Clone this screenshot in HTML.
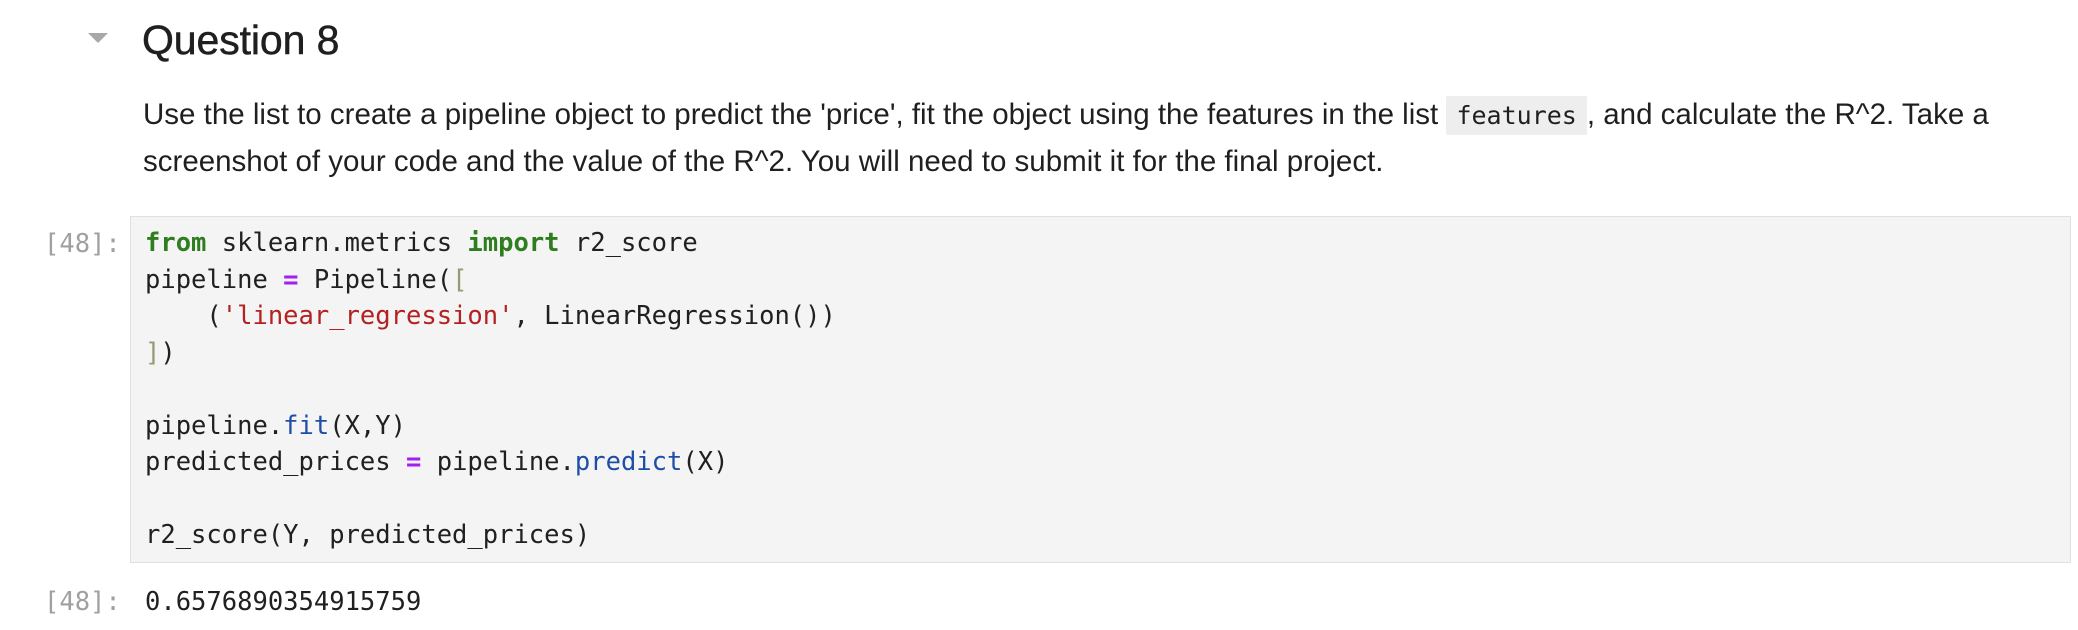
<!DOCTYPE html>
<html><head><meta charset="utf-8"><style>
body{margin:0;width:2078px;height:630px;background:#fff;position:relative;overflow:hidden;font-family:"Liberation Sans",Helvetica,Arial,sans-serif;color:#1f1f1f}
.tri{position:absolute;left:88px;top:33px;width:0;height:0;border-left:10px solid transparent;border-right:10px solid transparent;border-top:10px solid #a8a8a8}
h1{position:absolute;left:142px;top:16px;margin:0;font-size:41px;font-weight:normal;line-height:48px;letter-spacing:-0.1px;-webkit-text-stroke:0.5px #1f1f1f}
p{position:absolute;left:143px;top:92px;margin:0;width:1880px;font-size:29.5px;line-height:46px;letter-spacing:0}
code.i{font-family:"DejaVu Sans Mono",monospace;font-size:25px;background:#eee;padding:5px 10px;border-radius:2px;letter-spacing:0}
.m{font-family:"DejaVu Sans Mono","Liberation Mono",monospace;font-size:25.5px}
.cell{position:absolute;left:130px;top:216px;width:1939px;height:345px;background:#f4f4f4;border:1.5px solid #e0e0e0}
pre{margin:0;position:absolute;left:14px;top:8px;line-height:36.5px;color:#202020}
.pr{position:absolute;left:44px;color:#a0a0a0;line-height:36px}
.k{color:#2e7d1e;font-weight:bold}.o{color:#a020f0;font-weight:bold}.s{color:#b22222}.f{color:#1f4ea8}.b{color:#999977}
</style></head><body>
<div class="tri"></div>
<h1>Question 8</h1>
<p>Use the list to create a pipeline object to predict the 'price', fit the object using the features in the list <code class="i">features</code>, and calculate the R^2. Take a screenshot of your code and the value of the R^2. You will need to submit it for the final project.</p>
<div class="pr m" style="top:226px">[48]:</div>
<div class="cell"><pre class="m"><span class="k">from</span> sklearn.metrics <span class="k">import</span> r2_score
pipeline <span class="o">=</span> Pipeline(<span class="b">[</span>
    (<span class="s">'linear_regression'</span>, LinearRegression())
<span class="b">]</span>)

pipeline.<span class="f">fit</span>(X,Y)
predicted_prices <span class="o">=</span> pipeline.<span class="f">predict</span>(X)

r2_score(Y, predicted_prices)</pre></div>
<div class="pr m" style="top:584px">[48]:</div>
<div class="m" style="position:absolute;left:145px;top:584px;line-height:36px;color:#202020">0.6576890354915759</div>
</body></html>
